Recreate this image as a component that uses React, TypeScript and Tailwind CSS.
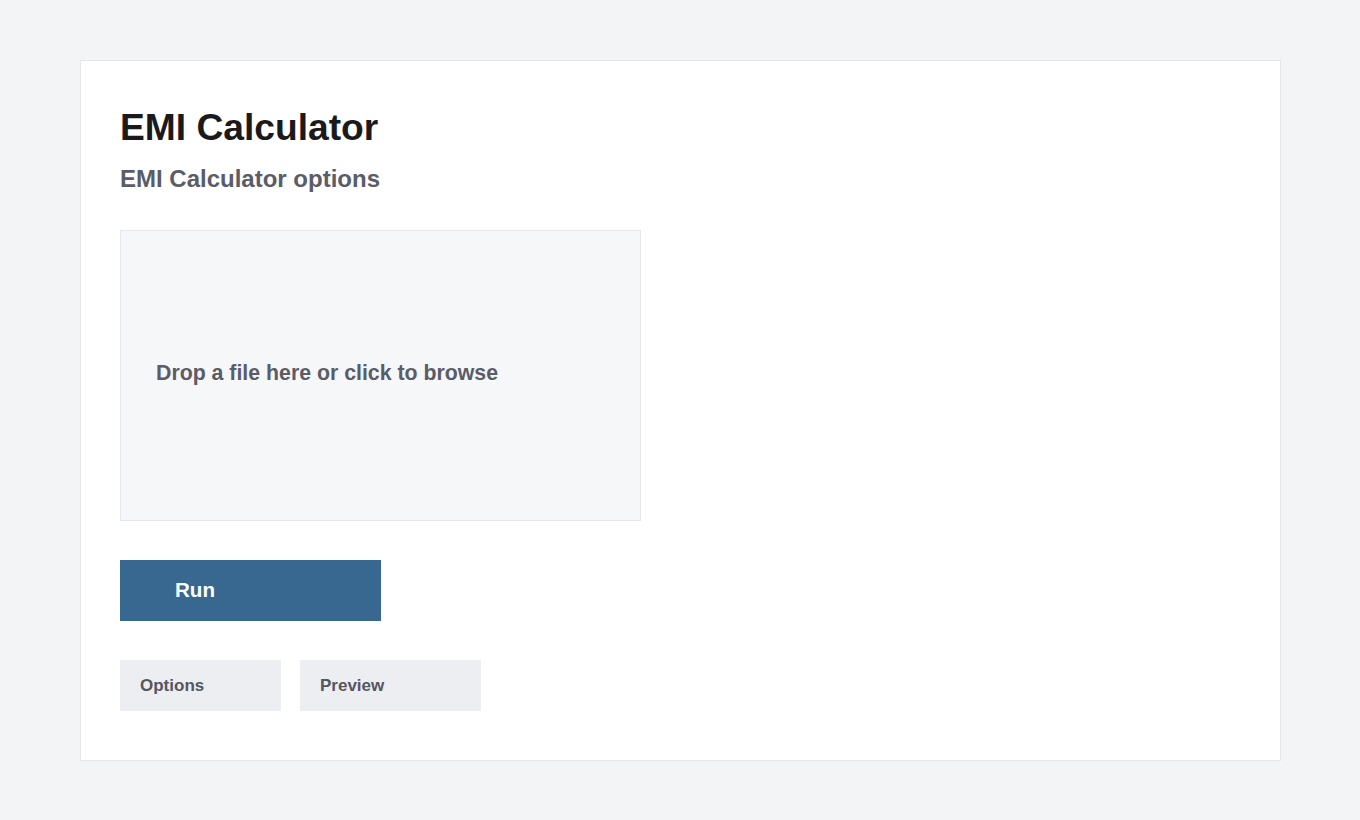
import React from "react";

export default function App() {
  return (
    <div className="min-h-screen bg-[#f3f4f6] pt-[60px] pl-[80px]" style={{ fontFamily: '"Liberation Sans", Arial, sans-serif' }}>
      <div className="bg-white border border-[#e5e7eb] w-[1201px] h-[701px] px-[39px] pt-[40px]">
        <h1 className="text-[37.2px] leading-[48px] font-bold text-[#1a1a1c] mt-[2px]">EMI Calculator</h1>
        <h2 className="text-[24px] leading-[30px] font-bold text-[#5a5c68] mt-[13px]">EMI Calculator options</h2>
        <div className="mt-[36px] w-[521px] h-[291px] bg-[#f6f7f8] border border-[#e5e7eb] flex items-center px-[35px] pb-[4px]">
          <span className="text-[21.3px] font-bold text-[#5a5c68]">Drop a file here or click to browse</span>
        </div>
        <button className="mt-[39px] w-[261px] h-[61px] bg-[#386890] text-white text-[20.6px] font-bold text-left pl-[55px] block">Run</button>
        <div className="mt-[39px] flex gap-[19px]">
          <button className="w-[161px] h-[51px] bg-[#eceef1] text-[17px] font-bold text-[#55565f] text-left pl-[20px]">Options</button>
          <button className="w-[181px] h-[51px] bg-[#eceef1] text-[17px] font-bold text-[#55565f] text-left pl-[20px]">Preview</button>
        </div>
      </div>
    </div>
  );
}
